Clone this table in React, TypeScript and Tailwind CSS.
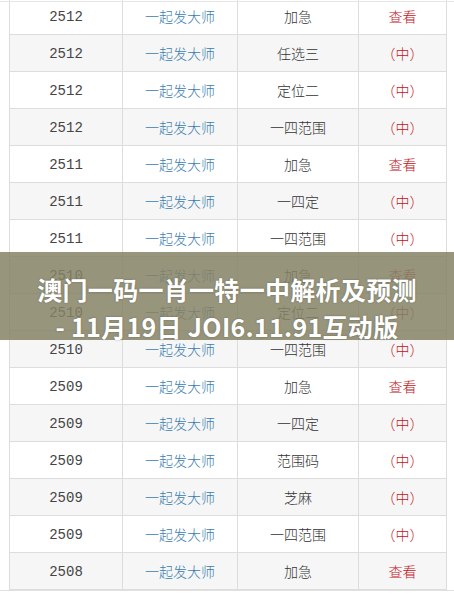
const rows: [string, string, string][] = [
  ["2512", "加急", "查看"],
  ["2512", "任选三", "（中）"],
  ["2512", "定位二", "（中）"],
  ["2512", "一四范围", "（中）"],
  ["2511", "加急", "查看"],
  ["2511", "一四定", "（中）"],
  ["2511", "一四范围", "（中）"],
  ["2510", "加急", "查看"],
  ["2510", "定位二", "（中）"],
  ["2510", "一四范围", "（中）"],
  ["2509", "加急", "查看"],
  ["2509", "一四定", "（中）"],
  ["2509", "范围码", "（中）"],
  ["2509", "芝麻", "（中）"],
  ["2509", "一四范围", "（中）"],
  ["2508", "加急", "查看"],
];

const cjk = { fontFamily: '"Noto Sans CJK SC", "Noto Sans", sans-serif' };

export default function App() {
  return (
    <div className="relative w-[454px] h-[594px] overflow-hidden bg-white">
      <table className="-mt-[3px] ml-[9px] w-[437px] border-collapse table-fixed text-[14px]">
        <colgroup>
          <col className="w-[113px]" />
          <col className="w-[115px]" />
          <col className="w-[121px]" />
          <col className="w-[88px]" />
        </colgroup>
        <tbody>
          {rows.map((r, i) => (
            <tr key={i} className={i % 2 === 1 ? "bg-[#f6f6f6]" : "bg-white"}>
              <td
                className="h-[37px] pt-[2px] border border-[#dddddd] text-center text-[14px] text-[#444]"
                style={{ fontFamily: '"Liberation Mono", monospace' }}
              >
                {r[0]}
              </td>
              <td className="border border-[#dddddd] text-center text-[#3a7db0] font-light" style={cjk}>
                一起发大师
              </td>
              <td className="border border-[#dddddd] text-center text-[#333] font-light" style={cjk}>
                {r[1]}
              </td>
              <td className="border border-[#dddddd] text-center text-[#c1121a] font-light" style={cjk}>
                {r[2]}
              </td>
            </tr>
          ))}
        </tbody>
      </table>
      <div className="absolute left-0 right-0 top-[1px] h-px bg-[#e6e6e6]" />
      <div className="absolute left-0 right-0 top-[590px] h-px bg-[#e0e0e0]" />

      <div className="absolute left-0 right-0 top-[252px] h-[88px] pt-[19px] bg-[#858365]/85 flex flex-col items-center">
        <div
          className="text-white font-bold text-[25px] leading-[37px] tracking-[0.3px] text-center [text-shadow:0_0_2px_rgba(0,0,0,0.3)]"
          style={cjk}
        >
          <div>澳门一码一肖一特一中解析及预测</div>
          <div>- 11月19日 JOI6.11.91互动版</div>
        </div>
      </div>
    </div>
  );
}
